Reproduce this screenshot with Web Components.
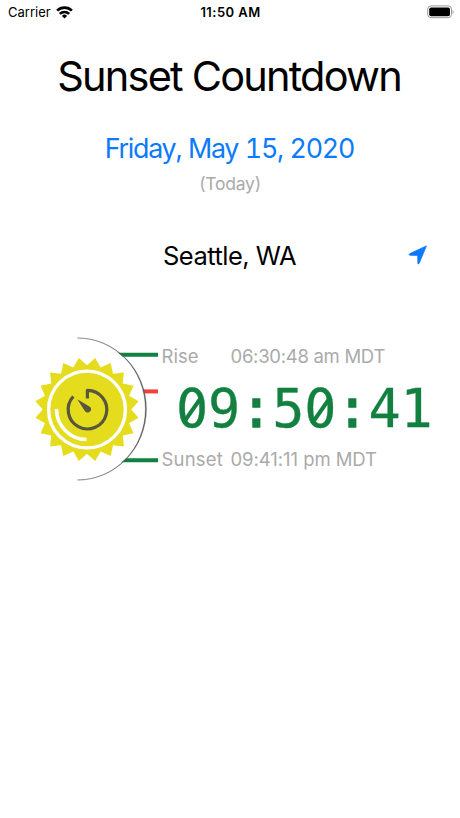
<!DOCTYPE html>
<html lang="en">
<head>
<meta charset="utf-8">
<title>Sunset Countdown</title>
<style>
    body {
        margin: 0;
        background: #fff;
        font-family: Inter, "Liberation Sans", sans-serif;
    }
</style>
</head>
<body>
<sunset-app></sunset-app>

<script>
class StatusBar extends HTMLElement {

    constructor() {
        super();
        this._shadowDOM = this.attachShadow({mode: "open"});
    }

    connectedCallback() {
        this._shadowDOM.innerHTML = `
        <style>
            :host {
                display: grid;
                grid-template-columns: 1fr auto 1fr;
                align-items: center;
                height: 24px;
                padding: 0 5px 0 8px;
                font-size: 13px;
                line-height: 24px;
                color: #000;
            }
            .carrier {
                display: flex;
                align-items: center;
                gap: 5px;
            }
            .time {
                font-weight: 600;
                letter-spacing: 0.45px;
                margin-right: 2px;
            }
            .battery {
                justify-self: end;
            }
            svg {
                display: block;
            }
        </style>
        <div class="carrier">
            <span>Carrier</span>
            <svg width="17" height="13" viewBox="0 0 17 13">
                <g fill="none" stroke="#000" stroke-width="2.6">
                    <path d="M1.100 4.700a10.400 10.400 0 0 1 14.800 0"/>
                    <path d="M3.800 7.900a6.600 6.600 0 0 1 9.400 0"/>
                </g>
                <path d="M8.500 12.500L5.900 9.900a3.700 3.700 0 0 1 5.200 0z"/>
            </svg>
        </div>
        <span class="time">${this.getAttribute("time")}</span>
        <svg class="battery" width="28" height="14" viewBox="0 0 28 14">
            <rect x="0.700" y="0.900" width="23.800" height="11.800" rx="3.400" fill="none" stroke="#999" stroke-width="1"/>
            <rect x="2.200" y="2.400" width="20.800" height="8.800" rx="1.900"/>
            <path d="M25.600 4.900a2.400 2.400 0 0 1 0 4z" fill="#999"/>
        </svg>
        `;
    }
}

customElements.define("status-bar", StatusBar);

class LocationRow extends HTMLElement {

    constructor() {
        super();
        this._shadowDOM = this.attachShadow({mode: "open"});
        this._shadowDOM.innerHTML = `
        <style>
            :host {
                display: grid;
                grid-template-columns: 1fr auto 1fr;
                align-items: center;
                height: 40px;
                padding: 0 32px;
                font-size: 25.5px;
                letter-spacing: -0.52px;
                color: #000;
            }
            .name {
                grid-column: 2;
                margin-right: 1px;
            }
            svg {
                display: block;
                justify-self: end;
            }
        </style>
        <span class="name"><slot></slot></span>
        <svg width="20" height="20" viewBox="0 0.200 20 20">
            <path d="M18.400 1.100L11.300 18.200Q10.600 19.600 9.900 18.900L9.700 10.600 1.700 10.400Q0.500 9.500 1.900 8.800z" fill="#0a7aff" stroke="#0a7aff" stroke-width="0.800" stroke-linejoin="round"/>
        </svg>
        `;
    }
}

customElements.define("location-row", LocationRow);

/**
 * Sun with a timer face, the day arc around it
 * and one tick each for sunrise, now and sunset.
 */
class SunDial extends HTMLElement {

    constructor() {
        super();
        this._shadowDOM = this.attachShadow({mode: "open"});
        this.render();
    }

    // alternate between tip and valley, 20 rays in total
    rays() {
        const points = [];
        for (let i = 0; i < 40; i++) {
            const radius = i % 2 ? 52.2 : 44.2;
            const angle = i * 9 * Math.PI / 180;
            points.push(`${(radius * Math.sin(angle)).toFixed(2)},${(-radius * Math.cos(angle)).toFixed(2)}`);
        }
        return points.join(" ");
    }

    render() {
        this._shadowDOM.innerHTML = `
        <style>
            :host {
                display: block;
                width: 130px;
                height: 150px;
            }
            svg {
                display: block;
            }
        </style>
        <svg width="130" height="150" viewBox="30 334 130 150">
            <g stroke-width="4">
                <path d="M110 354.700H158M110 460.200H158" stroke="#12803f"/>
                <path d="M130 391.400H158" stroke="#f5403a"/>
            </g>
            <circle cx="75.300" cy="409" r="70.600" fill="#fff"/>
            <path d="M77.500 338A68.900 71 0 0 1 77.500 480A67.900 71 0 0 0 77.500 338z" fill="#555" stroke="#555" stroke-width="0.400"/>
            <g transform="translate(87 409.500)">
                <polygon points="${this.rays()}" fill="#e5dc1e"/>
                <g fill="none">
                    <circle r="38.400" stroke="#fff" stroke-width="3.400"/>
                    <path d="M-30.500 -0.500A30.500 30.500 0 0 0 -0.500 30" stroke="#fff" stroke-width="3.600"/>
                    <path d="M0.400 -11V-19.200A19.300 19.300 0 1 1 -13.700 -13" stroke="#57573d" stroke-width="3.200" stroke-linejoin="round"/>
                </g>
                <path d="M-9.700 -10.200L3.200 -2.600A3.200 3.200 0 1 1 -2 1.700z" fill="#57573d"/>
            </g>
        </svg>
        `;
    }
}

customElements.define("sun-dial", SunDial);

class SunEvent extends HTMLElement {

    constructor() {
        super();
        this._shadowDOM = this.attachShadow({mode: "open"});
    }

    connectedCallback() {
        this._shadowDOM.innerHTML = `
        <style>
            :host {
                display: grid;
                grid-template-columns: 69px auto;
                height: 24px;
                font-size: 18.5px;
                line-height: 24px;
                color: #aaa;
                white-space: nowrap;
            }
            .label {
                letter-spacing: var(--label-spacing, 0);
            }
            .time {
                letter-spacing: var(--time-spacing, 0);
            }
        </style>
        <span class="label">${this.getAttribute("label")}</span>
        <span class="time">${this.getAttribute("time")}</span>
        `;
    }
}

customElements.define("sun-event", SunEvent);

class CountdownClock extends HTMLElement {

    constructor() {
        super();
        this._shadowDOM = this.attachShadow({mode: "open"});
    }

    connectedCallback() {
        // zeros get a slash drawn through the bowl, colons get heavier dots
        const digits = this.getAttribute("value")
            .replace(/0/g, `<b>0</b>`)
            .replace(/:/g, `<i>:</i>`);
        this._shadowDOM.innerHTML = `
        <style>
            :host {
                display: block;
                height: 79px;
                line-height: 81px;
                font-family: "DejaVu Sans Mono", monospace;
                font-size: 53.5px;
                letter-spacing: -0.15px;
                color: #12803f;
                white-space: nowrap;
                -webkit-text-stroke: 0.3px #12803f;
            }
            b, i {
                font-weight: inherit;
                font-style: inherit;
            }
            i {
                -webkit-text-stroke-width: 1.5px;
            }
            b {
                position: relative;
            }
            b::before {
                content: "";
                position: absolute;
                left: 11.5px;
                top: 22px;
                width: 9.400px;
                height: 22px;
                border-radius: 5px;
                background: #fff;
            }
            b::after {
                content: "";
                position: absolute;
                left: 14.300px;
                top: 18.500px;
                width: 3.600px;
                height: 29px;
                background: #12803f;
                transform: rotate(35deg);
            }
        </style>
        <div>${digits}</div>
        `;
    }
}

customElements.define("countdown-clock", CountdownClock);

class SunsetApp extends HTMLElement {

    constructor() {
        super();
        this._shadowDOM = this.attachShadow({mode: "open"});
        this._shadowDOM.innerHTML = `
        <style>
            :host {
                display: flex;
                flex-direction: column;
                width: 460px;
                height: 818px;
                overflow: hidden;
                background: #fff;
            }
            h1, .date, .day {
                text-align: center;
                white-space: nowrap;
            }
            h1 {
                margin: 22px 0 0;
                font-size: 41.5px;
                line-height: 60px;
                font-weight: 400;
                letter-spacing: -1.8px;
                text-indent: -1.8px;
            }
            .date {
                margin-top: 22px;
                font-size: 26.8px;
                line-height: 40px;
                letter-spacing: -1.23px;
                word-spacing: 0.6px;
                text-indent: -1.2px;
                font-feature-settings: "tnum";
                color: #0a7aff;
            }
            .day {
                margin-top: 4px;
                font-size: 17.5px;
                line-height: 24px;
                letter-spacing: -0.25px;
                color: #aaa;
            }
            location-row {
                margin-top: 39px;
            }
            .countdown {
                display: flex;
                gap: 1.500px;
                margin-top: 59px;
                padding-left: 30px;
            }
            .times {
                display: flex;
                flex-direction: column;
                padding-top: 10px;
            }
            countdown-clock {
                margin-left: 14.500px;
            }
            .rise {
                --time-spacing: -0.28px;
            }
            .set {
                --label-spacing: 0.2px;
                --time-spacing: -0.06px;
            }
        </style>
        <status-bar time="11:50 AM"></status-bar>
        <h1>Sunset Countdown</h1>
        <div class="date">Friday, May 15, 2020</div>
        <div class="day">(Today)</div>
        <location-row>Seattle, WA</location-row>
        <div class="countdown">
            <sun-dial></sun-dial>
            <div class="times">
                <sun-event class="rise" label="Rise" time="06:30:48 am MDT"></sun-event>
                <countdown-clock value="09:50:41"></countdown-clock>
                <sun-event class="set" label="Sunset" time="09:41:11 pm MDT"></sun-event>
            </div>
        </div>
        `;
    }
}

customElements.define("sunset-app", SunsetApp);
</script>
</body>
</html>
